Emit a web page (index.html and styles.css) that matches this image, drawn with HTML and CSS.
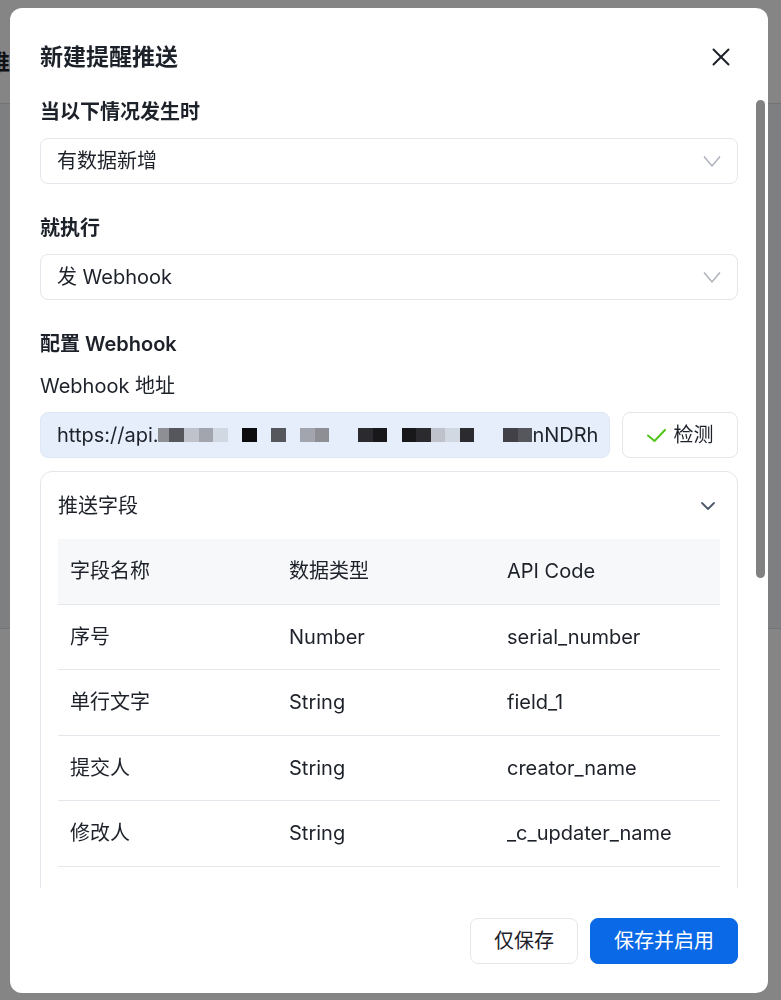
FILE: index.html
```html
<!DOCTYPE html>
<html lang="zh-CN">

<head>
    <meta charset="UTF-8">
    <meta name="viewport" content="width=device-width, initial-scale=1.0">
    <title>新建提醒推送</title>
    <link rel="stylesheet" href="styles.css">
</head>

<body>
    <!-- 底层页面 -->
    <div class="page">
        <div class="page-header">
            <h1 class="page-title">推送</h1>
        </div>
        <div class="page-main"></div>
        <div class="page-foot"></div>
    </div>

    <!-- 弹窗 -->
    <div class="mask">
        <div class="dialog">
            <div class="dialog-head">
                <h2>新建提醒推送</h2>
                <button class="close">
                    <svg width="18" height="18" viewBox="0 0 18 18" fill="none" stroke="#1d2129" stroke-width="2"
                        stroke-linecap="round">
                        <path d="M1.5 1.5l15 15M16.5 1.5l-15 15" />
                    </svg>
                </button>
            </div>

            <div class="dialog-body">
                <div class="field">
                    <div class="field-label">当以下情况发生时</div>
                    <div class="select">
                        <span>有数据新增</span>
                        <svg width="18" height="13" viewBox="0 0 18 13" fill="none" stroke="#a9aeb8"
                            stroke-width="1.4">
                            <polyline points="1,1.5 9,11 17,1.5" />
                        </svg>
                    </div>
                </div>

                <div class="field">
                    <div class="field-label">就执行</div>
                    <div class="select">
                        <span>发 Webhook</span>
                        <svg width="18" height="13" viewBox="0 0 18 13" fill="none" stroke="#a9aeb8"
                            stroke-width="1.4">
                            <polyline points="1,1.5 9,11 17,1.5" />
                        </svg>
                    </div>
                </div>

                <div class="section-title">配置 Webhook</div>
                <div class="sub-label">Webhook 地址</div>
                <div class="url-row">
                    <div class="url-input">
                        https://api.<span class="mosaic"><i class="px narrow c1"></i><i class="px c2"></i><i
                                class="px c3"></i><i class="px c4"></i><i class="px c5"></i><i class="px"></i><i
                                class="px c6"></i><i class="px"></i><i class="px c2"></i><i class="px"></i><i
                                class="px c4"></i><i class="px c1"></i><i class="px"></i><i class="px"></i><i
                                class="px c7"></i><i class="px c8"></i><i class="px"></i><i class="px c8"></i><i
                                class="px c7"></i><i class="px c3"></i><i class="px c5"></i><i class="px c7"></i><i
                                class="px"></i><i class="px"></i><i class="px c9"></i><i class="px c2"></i></span>nNDRh
                    </div>
                    <button class="btn btn-check">
                        <svg width="19" height="13" viewBox="0 0 19 13" fill="none" stroke="#52c41a" stroke-width="2"
                            stroke-linecap="round" stroke-linejoin="round">
                            <polyline points="1,6.5 7.5,12 18,1" />
                        </svg>
                        检测
                    </button>
                </div>

                <div class="fields-card">
                    <div class="card-head">
                        <span>推送字段</span>
                        <svg width="14" height="8" viewBox="0 0 14 8" fill="none" stroke="#4e5969" stroke-width="1.8"
                            stroke-linecap="round" stroke-linejoin="round">
                            <polyline points="1,1 7,7 13,1" />
                        </svg>
                    </div>
                    <table class="field-table">
                        <colgroup>
                            <col class="col-name">
                            <col class="col-type">
                            <col>
                        </colgroup>
                        <thead>
                            <tr>
                                <th>字段名称</th>
                                <th>数据类型</th>
                                <th>API Code</th>
                            </tr>
                        </thead>
                        <tbody>
                            <tr><td>序号</td><td>Number</td><td>serial_number</td></tr>
                            <tr><td>单行文字</td><td>String</td><td>field_1</td></tr>
                            <tr><td>提交人</td><td>String</td><td>creator_name</td></tr>
                            <tr><td>修改人</td><td>String</td><td>_c_updater_name</td></tr>
                            <tr><td>提交时间</td><td>Date</td><td>created_at</td></tr>
                            <tr><td>更新时间</td><td>Date</td><td>updated_at</td></tr>
                            <tr><td>数据 ID</td><td>String</td><td>record_id</td></tr>
                            <tr><td>多行文字</td><td>String</td><td>field_2</td></tr>
                            <tr><td>数字</td><td>Number</td><td>field_3</td></tr>
                            <tr><td>日期</td><td>Date</td><td>field_4</td></tr>
                            <tr><td>单选</td><td>String</td><td>field_5</td></tr>
                        </tbody>
                    </table>
                </div>
            </div>
            <!-- 内容区滚动条 -->
            <div class="scroll-thumb"></div>

            <div class="dialog-foot">
                <button class="btn">仅保存</button>
                <button class="btn btn-primary">保存并启用</button>
            </div>
        </div>
    </div>
</body>

</html>
```

FILE: styles.css
```css
* {
    margin: 0;
    padding: 0;
    box-sizing: border-box;
}

body {
    font-family: Inter, "Noto Sans CJK SC", sans-serif;
    font-size: 20px;
    line-height: 28px;
    color: #1d2129;
    background: #f2f3f5;
}

button {
    font: inherit;
    color: inherit;
    background: none;
    border: none;
    cursor: pointer;
}

/* 底层页面 */
.page {
    height: 1000px;
    display: flex;
    flex-direction: column;
}

.page-header {
    height: 104px;
    padding-top: 20px;
    background: #fff;
    border-bottom: 1px solid #dcdde2;
    display: flex;
    align-items: center;
}

.page-title {
    margin-left: -12px;
    font-size: 22px;
    font-weight: 600;
}

.page-main {
    flex: 1;
}

.page-foot {
    height: 372px;
    background: #fff;
    border-top: 1px solid #dcdde2;
}

/* 弹窗 */
.mask {
    position: fixed;
    inset: 0;
    padding: 8px 0 0 10px;
    background: rgba(0, 0, 0, .48);
}

.dialog {
    position: relative;
    width: 758px;
    height: 985px;
    background: #fff;
    border-radius: 12px;
    display: flex;
    flex-direction: column;
    overflow: hidden;
}

.dialog-head {
    display: flex;
    align-items: center;
    justify-content: space-between;
    padding: 32px 30px 24px;
}

.dialog-head h2 {
    font-size: 23px;
    line-height: 33px;
    font-weight: 600;
}

.close {
    width: 34px;
    height: 34px;
    display: flex;
    align-items: center;
    justify-content: center;
}

.dialog-body {
    flex: 1;
    overflow: hidden;
    padding: 0 30px;
}

.scroll-thumb {
    position: absolute;
    top: 92px;
    right: 3px;
    width: 9px;
    height: 478px;
    border-radius: 5px;
    background: #818181;
}

.field {
    margin-bottom: 30px;
}

.field-label,
.section-title {
    font-weight: 600;
}

.field-label {
    margin-bottom: 12px;
}

.select {
    height: 46px;
    padding: 0 16px;
    border: 1px solid #e5e6eb;
    border-radius: 8px;
    display: flex;
    align-items: center;
    justify-content: space-between;
}

.sub-label {
    margin: 14px 0 12px;
}

.url-row {
    display: flex;
    gap: 12px;
    margin-bottom: 13px;
}

.url-input {
    flex: 1;
    height: 46px;
    padding: 0 16px;
    background: #e7eefb;
    border: 1px solid #dfe7f6;
    border-radius: 8px;
    display: flex;
    align-items: center;
    white-space: nowrap;
    overflow: hidden;
}

/* 打码的地址片段 */
.mosaic {
    display: inline-flex;
    height: 14px;
}

.px {
    width: 14.52px;
    height: 14px;
}

.px.narrow {
    width: 11px;
}

.c1 { background: #8e8f95; }
.c2 { background: #56575c; }
.c3 { background: #bfc2ca; }
.c4 { background: #a2a5ad; }
.c5 { background: #d2d8e2; }
.c6 { background: #0c0c0e; }
.c7 { background: #2b2b2f; }
.c8 { background: #18181b; }
.c9 { background: #414147; }

.btn {
    height: 46px;
    padding: 0 23px;
    border: 1px solid #e5e6eb;
    border-radius: 8px;
    background: #fff;
}

.btn-check {
    width: 116px;
    padding: 0;
    display: flex;
    align-items: center;
    justify-content: center;
    gap: 8px;
}

.btn-primary {
    background: #0a69e6;
    border-color: #0a69e6;
    color: #fff;
}

/* 推送字段 */
.fields-card {
    border: 1px solid #e5e6eb;
    border-radius: 12px;
    padding: 20px 17px 8px;
}

.card-head {
    display: flex;
    align-items: center;
    justify-content: space-between;
    margin-bottom: 19px;
}

.card-head svg {
    margin-right: 5px;
}

.field-table {
    width: 100%;
    border-collapse: collapse;
    table-layout: fixed;
}

.field-table .col-name {
    width: 219px;
}

.field-table .col-type {
    width: 218px;
}

.field-table th,
.field-table td {
    text-align: left;
    font-weight: 400;
    padding: 18.25px 12px;
    border-bottom: 1px solid #e5e6eb;
    white-space: nowrap;
}

.field-table th {
    background: #f7f8fa;
}

.dialog-foot {
    display: flex;
    justify-content: flex-end;
    gap: 12px;
    padding: 30px 30px 29px;
}
```
